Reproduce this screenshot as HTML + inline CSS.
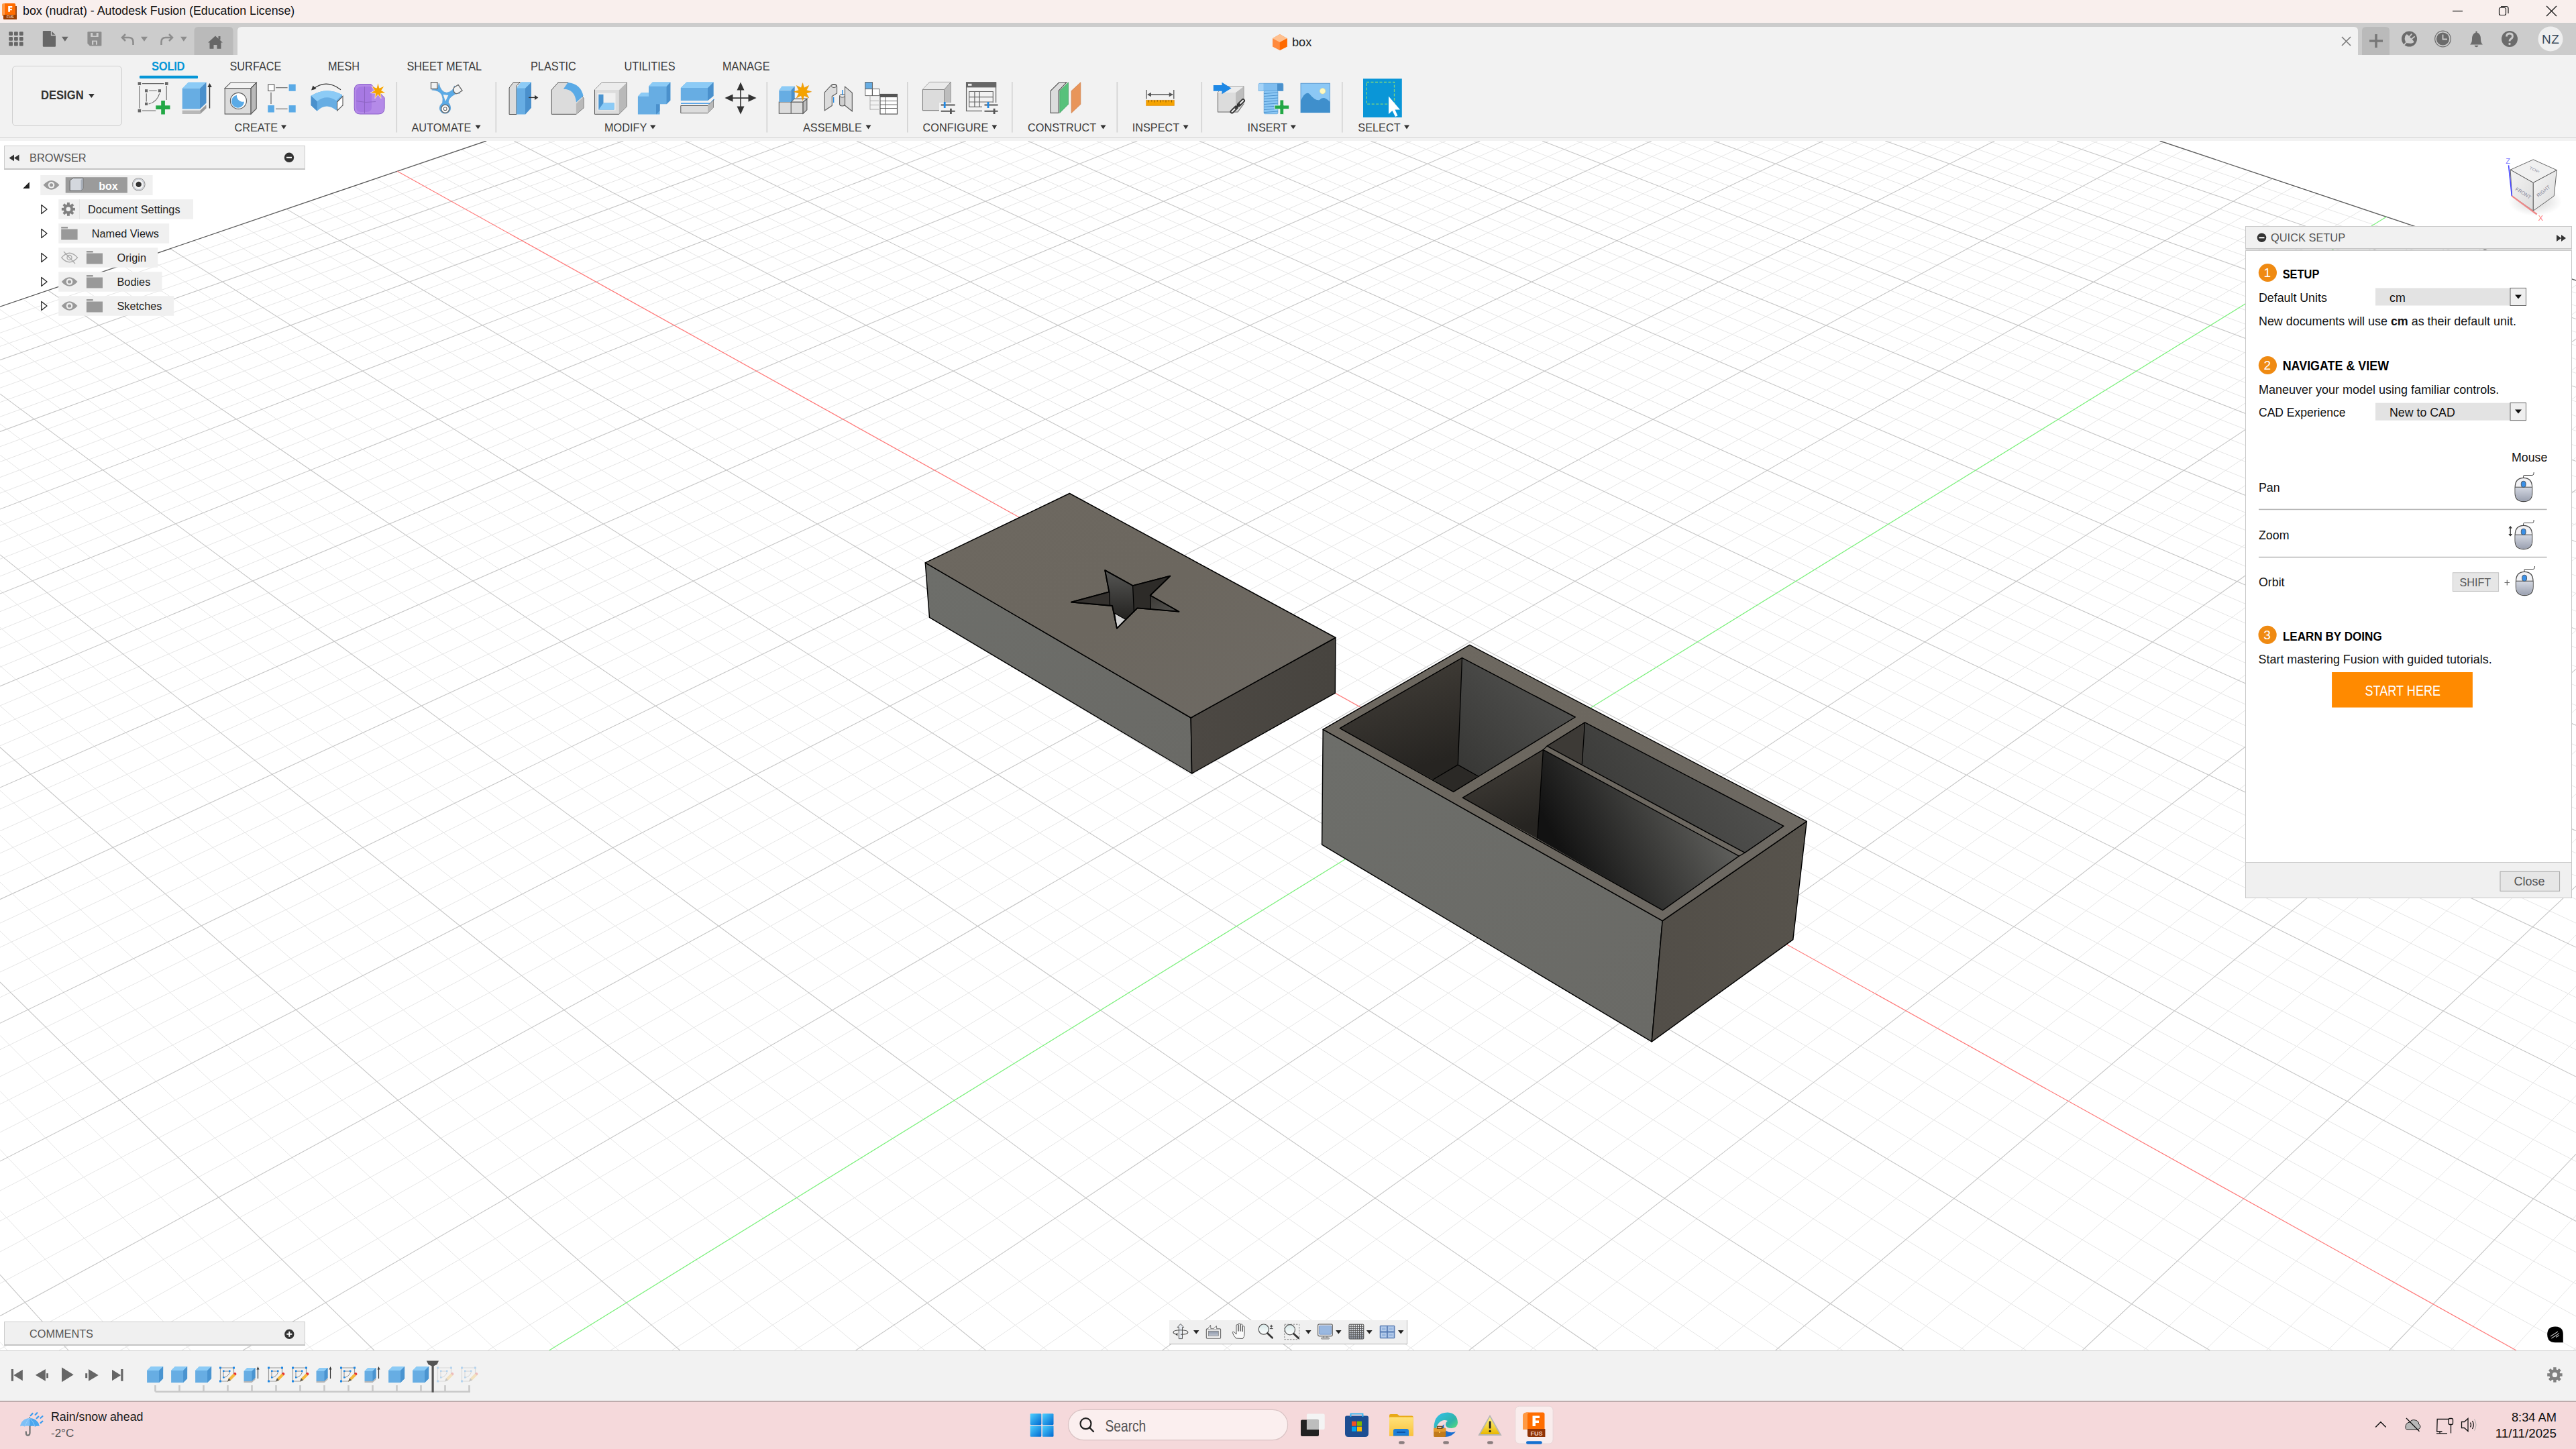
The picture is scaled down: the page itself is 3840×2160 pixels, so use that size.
<!DOCTYPE html>
<html><head><meta charset="utf-8"><title>box (nudrat) - Autodesk Fusion</title>
<style>
*{margin:0;padding:0;box-sizing:border-box}
html,body{width:3840px;height:2160px;overflow:hidden;background:#fff;font-family:"Liberation Sans",sans-serif;color:#222}
.abs{position:absolute}
#titlebar{position:absolute;left:0;top:0;width:3840px;height:34px;background:#f9efed}
#qat{position:absolute;left:0;top:34px;width:3840px;height:48px;background:#cccccc}
#ribbon{position:absolute;left:0;top:82px;width:3840px;height:128px;background:#f2f2f2;border-bottom:0}
#ribline{position:absolute;left:0;top:204px;width:3840px;height:1px;background:#d2d2d2}
#viewport{position:absolute;left:0;top:210px;width:3840px;height:1803px;background:#fff;overflow:hidden}
.grid{position:absolute;left:0;top:0}
#timeline{position:absolute;left:0;top:2013px;width:3840px;height:76px;background:#f2f2f2;border-top:1px solid #d4d4d4}
#taskbar{position:absolute;left:0;top:2088px;width:3840px;height:72px;background:#f5d9db;border-top:2px solid #bdabac}
.t{position:absolute;white-space:nowrap;line-height:1}
</style></head><body>

<div id="titlebar"></div>
<div id="qat"></div>
<div id="ribbon"></div>
<div id="ribline"></div>
<div id="viewport">

<svg class="grid" width="3840" height="1803" viewBox="0 0 3840 1803">
<path d="M0.0 266.6L776.1 0.0M0.0 286.3L827.2 0.0M0.0 306.3L878.2 0.0M0.0 347.3L980.3 0.0M0.0 368.3L1031.4 0.0M0.0 389.7L1082.5 0.0M0.0 411.3L1133.5 -0.0M0.0 455.8L1235.6 0.0M0.0 478.5L1286.7 0.0M0.0 501.6L1337.8 0.0M0.0 525.2L1388.8 0.0M0.0 573.4L1491.0 0.0M0.0 598.2L1542.1 0.0M0.0 623.4L1593.2 0.0M0.0 649.0L1644.2 0.0M0.0 701.7L1746.4 0.0M0.0 728.7L1797.5 0.0M0.0 756.3L1848.6 0.0M0.0 784.3L1899.7 0.0M0.0 842.0L2001.9 0.0M0.0 871.6L2053.0 0.0M0.0 901.8L2104.1 0.0M0.0 932.6L2155.2 0.0M0.0 996.0L2257.5 0.0M0.0 1028.7L2308.6 0.0M0.0 1062.0L2359.7 0.0M0.0 1096.0L2410.8 0.0M0.0 1166.1L2513.1 0.0M0.0 1202.2L2564.2 0.0M0.0 1239.1L2615.3 0.0M0.0 1276.8L2666.5 0.0M0.0 1354.7L2768.7 0.0M-0.0 1394.9L2819.9 0.0M0.0 1436.0L2871.0 0.0M0.0 1478.0L2922.2 0.0M0.0 1565.0L3024.5 0.0M0.0 1610.1L3075.6 0.0M0.0 1656.1L3126.8 0.0M0.0 1703.3L3177.9 0.0M0.0 1801.2L3257.3 12.6M88.0 1803.0L3289.4 23.4M179.3 1803.0L3321.7 34.2M270.7 1803.0L3354.4 45.2M453.3 1803.0L3420.8 67.4M544.7 1803.0L3454.4 78.7M636.0 1803.0L3488.4 90.1M727.4 1803.0L3522.7 101.6M910.1 1803.0L3592.3 125.0M1001.5 1803.0L3627.6 136.8M1092.8 1803.0L3663.3 148.8M1184.2 1803.0L3699.3 160.8M1367.0 1803.0L3772.4 185.4M1458.4 1803.0L3809.5 197.8M1549.8 1803.0L3840.0 215.2M1641.2 1803.0L3840.0 254.6M1824.0 1803.0L3840.0 337.4M1915.4 1803.0L3840.0 380.8M2006.8 1803.0L3840.0 425.6M2098.2 1803.0L3840.0 472.0M2281.1 1803.0L3840.0 569.7M2372.5 1803.0L3840.0 621.2M2464.0 1803.0L3840.0 674.6M2555.4 1803.0L3840.0 729.9M2738.3 1803.0L3840.0 847.1M2829.8 1803.0L3840.0 909.1M2921.2 1803.0L3840.0 973.7M3012.7 1803.0L3840.0 1040.9M3195.6 1803.0L3840.0 1184.0M3287.1 1803.0L3840.0 1260.2M3378.6 1803.0L3840.0 1339.9M3470.1 1803.0L3840.0 1423.2M3653.1 1803.0L3840.0 1601.9M3744.6 1803.0L3840.0 1697.8M3836.1 1803.0L3840.0 1798.5M0.0 1790.6L10.9 1803.0M0.0 1594.5L193.2 1803.0M0.0 1503.4L284.3 1803.0M0.0 1416.4L375.5 1803.0M0.0 1333.4L466.6 1803.0M0.0 1177.9L648.9 1803.0M0.0 1105.1L740.1 1803.0M0.0 1035.3L831.3 1803.0M0.0 968.3L922.4 1803.0M-0.0 842.1L1104.8 1803.0M0.0 782.6L1196.0 1803.0M-0.0 725.3L1287.2 1803.0M-0.0 670.1L1378.4 1803.0M0.0 565.5L1560.8 1803.0M0.0 516.0L1652.0 1803.0M0.0 468.1L1743.2 1803.0M0.0 421.9L1834.4 1803.0M0.0 333.9L2016.8 1803.0M0.0 292.0L2108.1 1803.0M0.0 251.4L2199.3 1803.0M33.9 235.6L2290.5 1803.0M108.6 210.2L2473.0 1803.0M145.4 197.6L2564.3 1803.0M181.9 185.2L2655.5 1803.0M217.9 172.9L2746.8 1803.0M289.0 148.7L2929.3 1803.0M324.0 136.7L3020.6 1803.0M358.7 124.9L3111.9 1803.0M393.1 113.2L3203.1 1803.0M460.8 90.1L3385.7 1803.0M494.1 78.7L3477.0 1803.0M527.2 67.5L3568.3 1803.0M559.9 56.3L3659.6 1803.0M624.5 34.3L3840.0 1801.8M656.3 23.5L3840.0 1752.2M687.8 12.7L3840.0 1703.8M719.1 2.1L3840.0 1656.6M817.3 0.0L3840.0 1565.4M868.4 0.0L3840.0 1521.3M919.4 0.0L3840.0 1478.3M970.5 0.0L3840.0 1436.2M1072.6 0.0L3840.0 1354.8M1123.7 0.0L3840.0 1315.4M1174.8 0.0L3840.0 1276.8M1225.8 0.0L3840.0 1239.1M1328.0 0.0L3840.0 1166.0M1379.1 0.0L3840.0 1130.5M1430.1 0.0L3840.0 1095.8M1481.2 0.0L3840.0 1061.8M1583.4 0.0L3840.0 995.7M1634.5 0.0L3840.0 963.7M1685.6 -0.0L3840.0 932.3M1736.7 0.0L3840.0 901.4M1838.9 0.0L3840.0 841.5M1890.0 0.0L3840.0 812.4M1941.1 0.0L3840.0 783.8M1992.2 0.0L3840.0 755.7M2094.5 0.0L3840.0 701.1M2145.6 0.0L3840.0 674.5M2196.7 0.0L3840.0 648.4M2247.8 -0.0L3840.0 622.7M2350.1 0.0L3840.0 572.7M2401.2 0.0L3840.0 548.3M2452.3 0.0L3840.0 524.3M2503.5 0.0L3840.0 500.8M2605.8 0.0L3840.0 454.8M2656.9 0.0L3840.0 432.4M2708.0 0.0L3840.0 410.4M2759.2 0.0L3840.0 388.7M2861.5 -0.0L3840.0 346.3M2912.6 0.0L3840.0 325.6M2963.8 0.0L3840.0 305.3M3015.0 -0.0L3840.0 285.2M3117.3 -0.0L3840.0 246.0M3168.5 0.0L3840.0 226.9" stroke="#e6e6e6" stroke-width="1" fill="none"/>
<path d="M0.0 326.7L929.3 0.0M0.0 433.4L1184.6 0.0M0.0 549.1L1439.9 0.0M0.0 675.1L1695.3 0.0M0.0 812.9L1950.8 0.0M0.0 964.0L2206.3 0.0M0.0 1130.7L2461.9 0.0M0.0 1315.3L2717.6 0.0M0.0 1521.0L2973.3 0.0M0.0 1751.7L3225.5 2.0M362.0 1803.0L3387.5 56.3M1275.6 1803.0L3735.6 173.0M1732.6 1803.0L3840.0 295.3M2189.7 1803.0L3840.0 520.0M2646.8 1803.0L3840.0 787.4M3104.1 1803.0L3840.0 1111.0M3561.6 1803.0L3840.0 1510.4M-0.0 1690.2L102.0 1803.0M0.0 1254.0L557.8 1803.0M0.0 903.9L1013.6 1803.0M0.0 616.9L1469.6 1803.0M0.0 377.1L1925.6 1803.0M71.5 222.8L2381.8 1803.0M253.6 160.7L2838.1 1803.0M427.1 101.6L3294.4 1803.0M766.3 0.0L3840.0 1610.4M1021.5 0.0L3840.0 1395.0M1276.9 0.0L3840.0 1202.1M1532.3 0.0L3840.0 1028.4M1787.8 0.0L3840.0 871.2M2043.3 0.0L3840.0 728.1M2298.9 0.0L3840.0 597.5M2554.6 0.0L3840.0 477.6M2810.3 0.0L3840.0 367.3M3066.1 0.0L3840.0 265.5" stroke="#c6c6c6" stroke-width="1.1" fill="none"/>
<path d="M0.0 247.2L725.1 0.0M3219.6 0.0L3840.0 208.0" stroke="#5e5e5e" stroke-width="1.35" fill="none"/>
<path d="M592.3 45.3L3750.9 1803.0" stroke="#ff7a7a" stroke-width="1.25" fill="none"/>
<path d="M818.7 1803.0L3557.3 113.2" stroke="#7cf07c" stroke-width="1.25" fill="none"/>
</svg>
<svg class="grid" width="3840" height="1803" viewBox="0 210 3840 1803">
<defs>
<linearGradient id="gTop" x1="0" y1="0" x2="1" y2="1"><stop offset="0" stop-color="#6d6860"/><stop offset="0.5" stop-color="#6c675f"/><stop offset="1" stop-color="#6e6a64"/></linearGradient>
<linearGradient id="gLeft" x1="0" y1="0" x2="1" y2="1"><stop offset="0" stop-color="#6d6e6a"/><stop offset="1" stop-color="#6a6a66"/></linearGradient>
<linearGradient id="gRight" x1="0" y1="0" x2="1" y2="0"><stop offset="0" stop-color="#4c4843"/><stop offset="1" stop-color="#47443f"/></linearGradient>
<linearGradient id="gBRight" x1="0" y1="0" x2="1" y2="0"><stop offset="0" stop-color="#524e48"/><stop offset="1" stop-color="#57534c"/></linearGradient>
<linearGradient id="gWallA" x1="0" y1="0" x2="0.3" y2="1"><stop offset="0" stop-color="#46423c"/><stop offset="1" stop-color="#262421"/></linearGradient>
<linearGradient id="gWallB" x1="1" y1="0" x2="0" y2="1"><stop offset="0" stop-color="#575755"/><stop offset="1" stop-color="#363634"/></linearGradient>
<linearGradient id="gFront" gradientUnits="userSpaceOnUse" x1="2560" y1="1225" x2="2360" y2="1330"><stop offset="0" stop-color="#5e5e5b"/><stop offset="0.45" stop-color="#3c3c3a"/><stop offset="1" stop-color="#121212"/></linearGradient>
<linearGradient id="gRB" x1="1" y1="0.3" x2="0" y2="0.7"><stop offset="0" stop-color="#555553"/><stop offset="1" stop-color="#393937"/></linearGradient>
<linearGradient id="gStarMain" x1="0" y1="0" x2="0" y2="1"><stop offset="0" stop-color="#555553"/><stop offset="1" stop-color="#232220"/></linearGradient>
<linearGradient id="gStarR" x1="0" y1="0" x2="1" y2="1"><stop offset="0" stop-color="#3b3935"/><stop offset="1" stop-color="#555451"/></linearGradient>
</defs>
<g stroke="#000" stroke-width="1.45" stroke-linejoin="round">
<!-- LID -->
<polygon fill="url(#gLeft)" points="1379.3,838.9 1775.2,1070.0 1776.7,1153.0 1385.5,920.3"/>
<polygon fill="url(#gRight)" points="1775.2,1070.0 1990.9,950.5 1990.3,1033.2 1776.7,1153.0"/>
<polygon fill="url(#gTop)" points="1594.4,735.5 1990.9,950.5 1775.2,1070.0 1379.3,838.9"/>
<!-- star -->
<polygon fill="#34322f" stroke-width="1.8" points="1647.2,850.1 1688.6,873.0 1744.3,858.7 1714.6,887.5 1757.4,911.7 1695.4,906.3 1665.0,936.7 1658.1,903.0 1596.9,897.6 1653.4,882.4"/>
<polygon fill="#34312e" stroke="none" points="1596.9,897.6 1653.4,882.4 1654.5,902.3 1658.1,903.0"/>
<polygon fill="url(#gStarMain)" stroke="none" points="1648.5,851.5 1688.2,873.6 1690.0,910.2 1677.7,923.3 1661.4,913.9 1658.4,903.5 1654.8,902.0 1653.9,882.6"/>
<polygon fill="#2d2b28" stroke="none" points="1689.2,873.8 1743.0,859.6 1714.0,887.5 1715.0,907.0 1695.4,906.3 1690.4,910.7"/>
<polygon fill="url(#gStarR)" stroke="none" points="1715.2,888.5 1755.5,911.2 1715.6,907.2"/>
<polygon fill="#d2d2d2" stroke-width="1.2" points="1661.4,913.9 1677.7,923.3 1665.0,936.7"/>
<path fill="none" stroke-width="1.3" d="M1653.9 882.6L1654.5 902.3M1688.6 873.0L1690.4 910.7M1714.6 887.5L1715.4 907.4"/>
<polygon fill="none" stroke-width="1.8" points="1647.2,850.1 1688.6,873.0 1744.3,858.7 1714.6,887.5 1757.4,911.7 1695.4,906.3 1665.0,936.7 1658.1,903.0 1596.9,897.6 1653.4,882.4"/>
<!-- BASE -->
<polygon fill="url(#gLeft)" points="1972.2,1087.3 2478.2,1372.6 2462.2,1552.8 1970.6,1259.2"/>
<polygon fill="url(#gBRight)" points="2478.2,1372.6 2693.2,1224.4 2672.8,1400.7 2462.2,1552.8"/>
<polygon fill="url(#gTop)" points="2190.8,961.4 2693.2,1224.4 2478.2,1372.6 1972.2,1087.3"/>
<!-- left compartment -->
<polygon fill="url(#gWallA)" stroke="none" points="1997.3,1085.6 2179.5,980.6 2173.3,1140.1 2136.0,1162.2"/>
<polygon fill="url(#gWallB)" stroke="none" points="2179.5,980.6 2348.2,1069.0 2203.3,1157.0 2173.3,1140.1"/>
<polygon fill="#2b2926" stroke="none" points="2136.0,1162.2 2173.3,1140.1 2203.3,1157.0 2166.6,1180.4"/>
<path fill="none" stroke-width="1.3" d="M2179.5 980.6L2173.3 1140.1M2136.0 1162.2L2173.3 1140.1L2203.3 1157.0"/>
<polygon fill="none" points="1997.3,1085.6 2179.5,980.6 2348.2,1069.0 2166.6,1180.4"/>
<!-- right back compartment -->
<polygon fill="#3d3a36" stroke="none" points="2306.1,1112.2 2362.5,1076.9 2358.3,1139.5"/>
<polygon fill="url(#gRB)" stroke="none" points="2362.5,1076.9 2658.9,1231.4 2601.0,1271.2 2358.3,1139.5"/>
<path fill="none" stroke-width="1.3" d="M2362.5 1076.9L2358.3 1139.5"/>
<polygon fill="none" points="2306.1,1112.2 2362.5,1076.9 2658.9,1231.4 2601.0,1271.2"/>
<!-- front compartment -->
<polygon fill="url(#gWallA)" stroke="none" points="2180.4,1189.2 2300.4,1117.6 2291.7,1250.0"/>
<polygon fill="url(#gFront)" stroke="none" points="2300.4,1117.6 2592.3,1276.1 2478.5,1356.9 2291.7,1250.0"/>
<path fill="none" stroke-width="1.3" d="M2300.4 1117.6L2291.7 1250.0"/>
<polygon fill="none" points="2180.4,1189.2 2300.4,1117.6 2592.3,1276.1 2478.5,1356.9"/>
<path fill="none" stroke-width="1.3" d="M2300.4 1117.6L2306.1 1112.2M2592.3 1276.1L2601.0 1271.2"/>
</g>
</svg>

</div>
<div id="timeline"></div>
<div id="taskbar"></div>

<!-- BROWSER PANEL -->
<div class="abs" style="left:6px;top:216.5px;width:449px;height:36px;background:#f1f1f1;border:1px solid #cbcbcb;border-bottom:2px solid #c4c4c4"></div>
<div class="t" style="left:44px;top:227px;font-size:16.4px;color:#555">BROWSER</div>
<svg class="abs" style="left:0;top:210px" width="460" height="270" viewBox="0 210 460 270">
<path d="M13.5 235.4L21 230.5V240.3ZM21 235.4L28.5 230.5V240.3Z" fill="#333"/>
<circle cx="431" cy="234.8" r="7.2" fill="#333"/><rect x="427" y="233.8" width="8" height="2" fill="#fff"/>
<g fill="#f0f0f0">
<rect x="60.2" y="261" width="167.4" height="29.9"/>
<rect x="87.2" y="297.2" width="200.8" height="29.5"/>
<rect x="87.2" y="333.2" width="165" height="29.5"/>
<rect x="87.2" y="369.2" width="148" height="29.5"/>
<rect x="87.2" y="405.2" width="154.3" height="29.5"/>
<rect x="87.2" y="441.2" width="172" height="29.5"/>
</g>
<path d="M34.1 280.9L43.9 271.3V280.9Z" fill="#222"/>
<path d="M61.8 305.5L70 312L61.8 318.6Z M61.8 341.5L70 348L61.8 354.6Z M61.8 377.5L70 384L61.8 390.6Z M61.8 413.5L70 420L61.8 426.6Z M61.8 449.5L70 456L61.8 462.6Z" fill="#fff" stroke="#222" stroke-width="1.3" stroke-linejoin="round"/>
<g fill="#999">
<path d="M64.6 275.8Q76.5 262 88.5 275.8Q76.5 289.5 64.6 275.8Z"/>
<path d="M91.8 420Q103.5 406.5 115.5 420Q103.5 433.5 91.8 420Z"/>
<path d="M91.8 456Q103.5 442.5 115.5 456Q103.5 469.5 91.8 456Z"/>
</g>
<g fill="#f0f0f0"><circle cx="76.5" cy="275.8" r="4.8"/><circle cx="103.5" cy="420" r="4.8"/><circle cx="103.5" cy="456" r="4.8"/></g>
<g fill="#999"><circle cx="76.5" cy="275.8" r="2.6"/><circle cx="103.5" cy="420" r="2.6"/><circle cx="103.5" cy="456" r="2.6"/></g>
<path d="M91.8 384Q103.5 370.5 115.5 384Q103.5 397.5 91.8 384Z" fill="none" stroke="#aaa" stroke-width="1.3"/>
<circle cx="103.5" cy="384" r="3.5" fill="none" stroke="#aaa" stroke-width="1.3"/>
<path d="M95 375L112 393" stroke="#aaa" stroke-width="1.3"/>
<rect x="97.7" y="264.2" width="92.2" height="23.4" fill="#9b9b9b"/>
<path d="M106.5 267L109.5 265.3H123.8V281L120.5 284.3H104.2V269.5Z" fill="#d4d8de" stroke="#555" stroke-width=".9"/>
<path d="M120.5 268.5L123.8 265.3V281L120.5 284.3Z" fill="#a9b0ba"/>
<circle cx="206.7" cy="274.9" r="9.4" fill="#f2f2f2" stroke="#888" stroke-width="1"/><circle cx="206.7" cy="274.9" r="7.8" fill="none" stroke="#c8ccd4" stroke-width="1.5"/>
<circle cx="206.7" cy="274.9" r="4.2" fill="#333"/>
<g fill="#808080" transform="translate(101.9 311.8)"><circle r="7.3"/><rect x="-1.95" y="-10" width="3.9" height="20"/><rect x="-1.95" y="-10" width="3.9" height="20" transform="rotate(45)"/><rect x="-1.95" y="-10" width="3.9" height="20" transform="rotate(90)"/><rect x="-1.95" y="-10" width="3.9" height="20" transform="rotate(135)"/></g>
<circle cx="101.9" cy="311.8" r="3.3" fill="#f0f0f0"/>
<rect x="118" y="297.2" width="1" height="29.5" fill="#e4e4e4"/>
<g fill="#999">
<path d="M91.2 340.5H101V338H91.2ZM91.2 341.5H115.6V357.5H91.2Z"/>
<path d="M128.9 376.5H138.7V374H128.9ZM128.9 377.5H153V393.5H128.9Z"/>
<path d="M128.9 412.5H138.7V410H128.9ZM128.9 413.5H153V429.5H128.9Z"/>
<path d="M128.9 448.5H138.7V446H128.9ZM128.9 449.5H153V465.5H128.9Z"/>
</g>
</svg>
<div class="t" style="left:147.2px;top:269.5px;font-size:16px;font-weight:bold;color:#fff">box</div>
<div class="t" style="left:131px;top:303.5px;font-size:16.3px;color:#222">Document Settings</div>
<div class="t" style="left:136.8px;top:339.5px;font-size:16.3px;color:#222">Named Views</div>
<div class="t" style="left:174.5px;top:375.5px;font-size:16.3px;color:#222">Origin</div>
<div class="t" style="left:174.5px;top:411.5px;font-size:16.3px;color:#222">Bodies</div>
<div class="t" style="left:174.5px;top:447.5px;font-size:16.3px;color:#222">Sketches</div>
<!-- COMMENTS -->
<div class="abs" style="left:6px;top:1970.3px;width:449px;height:36px;background:#f0f0f0;border:1px solid #cbcbcb;border-bottom:2px solid #c4c4c4"></div>
<div class="t" style="left:44px;top:1980px;font-size:16.3px;color:#555">COMMENTS</div>
<svg class="abs" style="left:420px;top:1978px" width="24" height="24" viewBox="420 1978 24 24"><circle cx="431.3" cy="1988.8" r="7.2" fill="#333"/><path d="M427.3 1988.8H435.3M431.3 1984.8V1992.8" stroke="#fff" stroke-width="2"/></svg>
<!-- QUICK SETUP -->
<div class="abs" style="left:3347px;top:336.5px;width:486.5px;height:35.5px;background:#f1f1f1;border:1px solid #c8c8c8;border-bottom:2px solid #c4c4c4"></div>
<div class="abs" style="left:3347px;top:373px;width:486.5px;height:966px;background:#fff;border:1px solid #c8c8c8"></div>
<div class="abs" style="left:3348px;top:1285.4px;width:484.5px;height:53px;background:#f0f0f0;border-top:1px solid #c8c8c8"></div>
<div class="t" style="left:3385px;top:345.5px;font-size:16.4px;color:#555">QUICK SETUP</div>
<svg class="abs" style="left:3340px;top:330px" width="500" height="1020" viewBox="3340 330 500 1020">
<circle cx="3371.5" cy="354.3" r="6.8" fill="#333"/><rect x="3367.5" y="353.3" width="8" height="2" fill="#fff"/>
<path d="M3811 350L3818 355L3811 360ZM3818 350L3825 355L3818 360Z" fill="#333"/>
<g fill="#ef8a12"><circle cx="3380.4" cy="406.5" r="13.6"/><circle cx="3380.4" cy="544.5" r="13.6"/><circle cx="3380.1" cy="946.4" r="13.6"/></g>
<rect x="3541" y="429.4" width="224.5" height="26.1" fill="#e3e3e3"/>
<rect x="3541" y="600.6" width="224.5" height="26.1" fill="#e3e3e3"/>
<rect x="3742" y="429.4" width="23.5" height="26.1" fill="#efefef" stroke="#666" stroke-width="1"/>
<rect x="3742" y="600.6" width="23.5" height="26.1" fill="#efefef" stroke="#666" stroke-width="1"/>
<path d="M3749 439.5H3759L3754 445.5ZM3749 610.5H3759L3754 616.5Z" fill="#111"/>
<rect x="3367" y="758.6" width="429.6" height="1.6" fill="#b8b8b8"/>
<rect x="3367" y="829.8" width="429.6" height="1.6" fill="#b8b8b8"/>
<rect x="3656.4" y="853.7" width="68.2" height="27.8" fill="#e6e6e6" stroke="#c4c4c4" stroke-width="1"/>
<path d="M3733.5 868.5H3741M3737.3 864.5V872.5" stroke="#666" stroke-width="1.2"/>
<defs><linearGradient id="mgr" x1="0" y1="0" x2="0" y2="1"><stop offset="0" stop-color="#d4d8e2"/><stop offset="1" stop-color="#9aa0b0"/></linearGradient></defs>
<g id="mouse">
<path d="M3761.6 713V709.5Q3761.6 708.5 3762.6 708.5H3774.5Q3776.5 708.5 3776.8 706.8L3777.2 704" fill="none" stroke="#444" stroke-width="1"/>
<path d="M3749.1 727Q3749.1 712.4 3761.9 712.4Q3774.7 712.4 3774.7 727V735Q3774.7 747.6 3761.9 747.6Q3749.1 747.6 3749.1 735Z" fill="#f2f2f5" stroke="#444" stroke-width="1.2"/>
<path d="M3749.6 726.4H3774.2V735Q3774.2 747 3761.9 747Q3749.6 747 3749.6 735Z" fill="url(#mgr)"/>
<path d="M3749.1 726.2H3774.7" stroke="#444" stroke-width="1"/>
<rect x="3758.3" y="717.3" width="6.8" height="9" rx="3" fill="#3a90e8" stroke="#444" stroke-width=".8"/>
</g>
<use href="#mouse" x="0" y="71"/>
<use href="#mouse" x="1.4" y="140"/>
<path d="M3742.2 785V798.5" stroke="#333" stroke-width="1.3"/><path d="M3739.3 787.5L3742.2 784L3745.1 787.5ZM3739.3 796L3742.2 799.5L3745.1 796Z" fill="#333"/>
<rect x="3476.1" y="1002" width="209.8" height="52.6" fill="#ff8a00"/>
<rect x="3727" y="1299.3" width="88.6" height="29" fill="#e6e6e6" stroke="#a8a8a8" stroke-width="1"/>
</svg>
<div class="t" style="left:3374.5px;top:396.5px;font-size:19px;color:#fff">1</div>
<div class="t" style="left:3374.5px;top:534.5px;font-size:19px;color:#fff">2</div>
<div class="t" style="left:3374.2px;top:936.5px;font-size:19px;color:#fff">3</div>
<div class="t" style="left:3402.7px;top:400.5px;font-size:16.4px;font-weight:bold;color:#000;transform:scaleY(1.12);transform-origin:0 100%">SETUP</div>
<div class="t" style="left:3367px;top:436px;font-size:17.8px;color:#111">Default Units</div>
<div class="t" style="left:3562px;top:436px;font-size:17.8px;color:#111">cm</div>
<div class="t" style="left:3367px;top:471px;font-size:17.9px;color:#111">New documents will use <b>cm</b> as their default unit.</div>
<div class="t" style="left:3402.7px;top:537.5px;font-size:17.9px;font-weight:bold;color:#000;transform:scaleY(1.1);transform-origin:0 100%">NAVIGATE &amp; VIEW</div>
<div class="t" style="left:3367px;top:571.5px;font-size:18px;color:#111">Maneuver your model using familiar controls.</div>
<div class="t" style="left:3367px;top:607px;font-size:17.5px;color:#111">CAD Experience</div>
<div class="t" style="left:3562px;top:607px;font-size:17.8px;color:#111">New to CAD</div>
<div class="t" style="left:3744px;top:674px;font-size:17.8px;color:#111">Mouse</div>
<div class="t" style="left:3367px;top:719px;font-size:17.8px;color:#111">Pan</div>
<div class="t" style="left:3367px;top:790px;font-size:17.8px;color:#111">Zoom</div>
<div class="t" style="left:3367px;top:860px;font-size:17.8px;color:#111">Orbit</div>
<div class="t" style="left:3666.5px;top:860px;font-size:16.2px;color:#555">SHIFT</div>
<div class="t" style="left:3402.9px;top:941px;font-size:17.1px;font-weight:bold;color:#000;transform:scaleY(1.08);transform-origin:0 100%">LEARN BY DOING</div>
<div class="t" style="left:3366.6px;top:974.5px;font-size:17.9px;color:#111">Start mastering Fusion with guided tutorials.</div>
<div class="t" style="left:3525.5px;top:1021px;font-size:18.1px;color:#fff;transform:scaleY(1.18);transform-origin:0 50%">START HERE</div>
<div class="t" style="left:3747.5px;top:1305px;font-size:18px;color:#555">Close</div>
<!-- VIEWCUBE -->
<svg class="abs" style="left:3700px;top:215px" width="140" height="125" viewBox="3700 215 140 125">
<defs><radialGradient id="vcs" cx=".5" cy=".5" r=".5"><stop offset="0" stop-color="#000" stop-opacity=".18"/><stop offset="1" stop-color="#000" stop-opacity="0"/></radialGradient>
<linearGradient id="vcf" x1="0" y1="0" x2="1" y2="1"><stop offset="0" stop-color="#f4f4f4"/><stop offset="1" stop-color="#dcdcdc"/></linearGradient></defs>
<ellipse cx="3779" cy="300" rx="40" ry="22" fill="url(#vcs)"/>
<path d="M3776.3 237.9L3811.3 253.6L3776.3 272.4L3742.2 253.1Z" fill="#f0f0f0" stroke="#555" stroke-width=".9"/>
<path d="M3742.2 253.1L3776.3 272.4V314.2L3744.4 292.2Z" fill="url(#vcf)" stroke="#555" stroke-width=".9"/>
<path d="M3776.3 272.4L3811.3 253.6L3807.2 292.2L3776.3 314.2Z" fill="url(#vcf)" stroke="#555" stroke-width=".9"/>
<path d="M3744.4 292.2L3739.5 246.4" stroke="#4444ff" stroke-width="1.6"/>
<path d="M3744.4 292.2L3781.7 319.5" stroke="#e88" stroke-width="2.2"/>
<text x="3738.6" y="244" font-family="Liberation Sans" font-size="11" fill="#7777ff" text-anchor="middle">Z</text>
<text x="3787.5" y="329" font-family="Liberation Sans" font-size="11" fill="#ff7777" text-anchor="middle">X</text>
<text transform="translate(3777 255) rotate(25) scale(1 .7)" font-family="Liberation Sans" font-size="8" fill="#99a" text-anchor="middle">TOP</text>
<text transform="translate(3760 290) rotate(32) skewY(0)" font-family="Liberation Sans" font-size="7.5" fill="#889" text-anchor="middle">FRONT</text>
<text transform="translate(3793 287) rotate(-40)" font-family="Liberation Sans" font-size="7.5" fill="#889" text-anchor="middle">RIGHT</text>
</svg>
<!-- NAV BAR -->
<div class="abs" style="left:1743px;top:1968px;width:355px;height:35.5px;background:#f0f0f0;border-right:1px solid #b8b8b8;border-bottom:1.5px solid #aaa"></div>
<svg class="abs" style="left:1740px;top:1965px" width="365" height="42" viewBox="1740 1965 365 42">
<defs><linearGradient id="nglass" x1="0" y1="0" x2="0" y2="1"><stop offset="0" stop-color="#d8eaea"/><stop offset="1" stop-color="#fdfdfd"/></linearGradient>
<linearGradient id="nscr" x1="0" y1="0" x2="0" y2="1"><stop offset="0" stop-color="#8a94a6"/><stop offset="1" stop-color="#c0c6d2"/></linearGradient>
<linearGradient id="ngrid" x1="0" y1="0" x2="0" y2="1"><stop offset="0" stop-color="#fff"/><stop offset="1" stop-color="#9aa4b4"/></linearGradient></defs>
<g fill="#222"><path d="M1779 1983H1787.5L1783.25 1988.6Z"/><path d="M1946.1 1983.1H1954.6L1950.35 1988.6Z"/><path d="M1991.1 1983.1H1999.6L1995.35 1988.6Z"/><path d="M2036.8 1983.1H2045.7L2041.25 1988.6Z"/><path d="M2084 1983.1H2092.5L2088.25 1988.6Z"/></g>
<path d="M1757.3 1995.6V1978.6H1755.1L1759.9 1973.5L1764.7 1978.6H1762.5V1995.6Z" fill="#e4e8ee" stroke="#555" stroke-width="1"/>
<path d="M1754 1989Q1749 1988 1749 1986Q1749 1982.7 1759.9 1982.7Q1770.9 1982.7 1770.9 1986Q1770.9 1989.3 1760 1989.3" fill="none" stroke="#444" stroke-width="1.1"/>
<path d="M1752.5 1989.2L1755.3 1986.8V1991.6Z" fill="#333"/>
<rect x="1798.3" y="1980.9" width="21.3" height="14.3" rx="1.2" fill="#f0f0f0" stroke="#666" stroke-width="1.1"/>
<rect x="1801.6" y="1984.2" width="14.7" height="7.3" fill="url(#nscr)" stroke="#777" stroke-width=".7"/>
<path d="M1800.5 1980.9L1804.5 1975.3L1805 1980.9M1808.6 1980.9L1813.4 1976.5L1813.8 1980.9" fill="#f8f8f8" stroke="#666" stroke-width=".9"/>
<path d="M1842.5 1995Q1838 1990 1837.4 1986.5Q1837 1985 1838.6 1985.3Q1841 1986 1843 1989V1976Q1843 1974.5 1844.5 1974.5Q1846 1974.5 1846 1976V1984.5V1974Q1846 1972.8 1847.6 1972.8Q1849.1 1972.8 1849.1 1974V1984.5V1975.2Q1849.1 1974 1850.6 1974Q1852.1 1974 1852.1 1975.2V1985V1978Q1852.1 1976.8 1853.6 1976.8Q1855.1 1976.8 1855.1 1978V1988Q1855.1 1993 1852.5 1995.5Z" fill="#fafafa" stroke="#555" stroke-width="1"/>
<circle cx="1883.8" cy="1981.6" r="7.6" fill="url(#nglass)" stroke="#555" stroke-width="1.2"/>
<path d="M1889.5 1987.6L1896.6 1994.3" stroke="#333" stroke-width="2.8" stroke-linecap="round"/>
<path d="M1895.2 1974.8V1979.3M1893 1977H1897.4M1892.8 1980.6H1897.6" stroke="#333" stroke-width="1"/>
<rect x="1914.8" y="1974.2" width="22" height="22.5" fill="none" stroke="#888" stroke-width="1" stroke-dasharray="2.5 1.8"/>
<circle cx="1922.9" cy="1982.3" r="7.6" fill="url(#nglass)" stroke="#555" stroke-width="1.2"/>
<path d="M1928.5 1988.2L1935.5 1994.6" stroke="#333" stroke-width="2.8" stroke-linecap="round"/>
<rect x="1964.7" y="1974" width="21.5" height="17.6" rx="1.5" fill="#fafafa" stroke="#444" stroke-width="1.1"/>
<rect x="1966.6" y="1976.2" width="17.8" height="13" rx=".8" fill="#9ab8e0" stroke="#5b7fb8" stroke-width=".7"/>
<path d="M1973 1991.6V1994M1978 1991.6V1994" stroke="#777" stroke-width="1"/><rect x="1969.5" y="1994" width="12" height="2" rx="1" fill="#ddd" stroke="#555" stroke-width=".7"/>
<rect x="2011" y="1974.2" width="21.8" height="21.8" rx="1" fill="url(#ngrid)" stroke="#444" stroke-width="1"/>
<path d="M2011 1977.3H2032.8M2011 1980.4H2032.8M2011 1983.5H2032.8M2011 1986.6H2032.8M2011 1989.7H2032.8M2011 1992.8H2032.8M2014.1 1974.2V1996M2017.2 1974.2V1996M2020.3 1974.2V1996M2023.4 1974.2V1996M2026.5 1974.2V1996M2029.6 1974.2V1996" stroke="#555" stroke-width=".9"/>
<rect x="2057.3" y="1976.3" width="21.5" height="18.5" rx="1" fill="#9ab8e0" stroke="#4a6ea8" stroke-width="1.1"/>
<path d="M2068 1976.3V1994.8M2057.3 1985.5H2078.8" stroke="#4a6ea8" stroke-width="1.3"/>
<path d="M2059.5 1978.5H2066V1983.5H2059.5ZM2070 1978.5H2076.5V1983.5H2070ZM2059.5 1987.5H2066V1992.5H2059.5ZM2070 1987.5H2076.5V1992.5H2070Z" fill="none" stroke="#c8d8f0" stroke-width=".7"/>
</svg>
<svg class="abs" style="left:3795px;top:1976px" width="28" height="28" viewBox="3795 1976 28 28">
<path d="M3809 1977.5Q3820.8 1977.5 3820.8 1989.3V2001.2H3809Q3797.2 2001.2 3797.2 1989.3Q3797.2 1977.5 3809 1977.5Z" fill="#000"/>
<path d="M3802 1992L3813 1985M3803.5 1995L3815 1987.5M3810 1993.5L3815 1990.5" stroke="#fff" stroke-width="1"/>
</svg>

<!-- TITLE BAR -->
<svg class="abs" style="left:0;top:0" width="30" height="34" viewBox="0 0 30 34">
<path d="M3 7Q3 5.5 4.5 5.2L6.8 5V23.5H3Z" fill="#ff9b48"/>
<path d="M6.8 5H21.3Q23.1 5 23.1 6.8V21.9H6.8Z" fill="#ff6c00"/>
<path d="M23.1 8.9H24.9V28.9H23.1Z" fill="#8f3a06"/>
<path d="M5 21.9H24.9V28.9H6Q5 28.9 5 27.9Z" fill="#993d00"/>
<text x="15.1" y="27.2" font-family="Liberation Sans" font-weight="bold" font-size="5.6" fill="#ecd0bb" text-anchor="middle" letter-spacing="-.2">FUS</text>
<path d="M12.2 9H18.3V11.5H15V12.9H17.8V15.3H15V17.8H12.2Z" fill="#fff"/>
</svg>
<div class="t" style="left:34px;top:8px;font-size:17.8px;color:#111">box (nudrat) - Autodesk Fusion (Education License)</div>
<svg class="abs" style="left:3640px;top:0" width="200" height="34" viewBox="3640 0 200 34">
<path d="M3656 16.5H3671" stroke="#111" stroke-width="1.2"/>
<rect x="3725.5" y="11.5" width="10" height="11" rx="2" fill="none" stroke="#111" stroke-width="1.2"/>
<path d="M3728 9.5H3736Q3739 9.5 3739 12.5V20" fill="none" stroke="#111" stroke-width="1.2"/>
<path d="M3796 9L3811 24M3811 9L3796 24" stroke="#111" stroke-width="1.3"/>
</svg>

<!-- QAT -->
<svg class="abs" style="left:0;top:34px" width="3840" height="48" viewBox="0 34 3840 48">
<g fill="#676767">
<rect x="13.2" y="47.2" width="5.8" height="5.8" rx="1.2"/><rect x="21" y="47.2" width="5.8" height="5.8" rx="1.2"/><rect x="28.8" y="47.2" width="5.8" height="5.8" rx="1.2"/>
<rect x="13.2" y="55" width="5.8" height="5.8" rx="1.2"/><rect x="21" y="55" width="5.8" height="5.8" rx="1.2"/><rect x="28.8" y="55" width="5.8" height="5.8" rx="1.2"/>
<rect x="13.2" y="62.6" width="5.8" height="5.8" rx="1.2"/><rect x="21" y="62.6" width="5.8" height="5.8" rx="1.2"/><rect x="28.8" y="62.6" width="5.8" height="5.8" rx="1.2"/>
<path d="M65 46H76.5L83 52.5V68.5Q83 69.8 81.8 69.8H65Q63.8 69.8 63.8 68.5V47.2Q63.8 46 65 46Z"/>
<path d="M92 54.8H101.7L96.85 61.7Z"/>
</g>
<path d="M76.5 46V52.5H83" fill="none" stroke="#cccccc" stroke-width="1.3"/>
<g fill="#8d8d8d">
<path d="M131.6 47.2H150.2Q151.4 47.2 151.4 48.4V67.2Q151.4 68.4 150.2 68.4H134L130.4 64.8V48.4Q130.4 47.2 131.6 47.2Z"/>
<path d="M210 54.8H220L215 61.7Z"/><path d="M269 54.8H278.7L273.85 61.7Z"/>
</g>
<g fill="#cccccc"><rect x="135.2" y="49" width="11.5" height="6"/><rect x="137" y="60.5" width="8" height="6.2"/></g>
<g fill="#8d8d8d"><rect x="138.2" y="49" width="5.5" height="4.5"/><rect x="139.2" y="62" width="3.8" height="5"/></g>
<path d="M187 51L182 56L187 61M182.5 56H192Q198.5 56 198.5 62.5V67" fill="none" stroke="#8d8d8d" stroke-width="2.6"/>
<path d="M252 51L257 56L252 61M256.5 56H247Q240.5 56 240.5 62.5V67" fill="none" stroke="#8d8d8d" stroke-width="2.6"/>
<path d="M289.5 82V46Q289.5 40 295.5 40H341.5Q347.5 40 347.5 46V82Z" fill="#bababa"/>
<path d="M310 63.5L321 53.5L332 63.5H329.5V72.8H323.5V67H318.5V72.8H312.5V63.5Z" fill="#676767"/>
<rect x="325.5" y="54" width="3" height="5" fill="#676767"/>
<path d="M354 82V46Q354 40 360 40H3509Q3515 40 3515 46V82Z" fill="#f2f2f2"/>
<path d="M3521 82V46Q3521 40 3527 40H3556Q3562 40 3562 46V82Z" fill="#bababa"/>
<path d="M3542 51V71M3532 61H3552" stroke="#787878" stroke-width="3.6"/>
<path d="M3491 55L3504 68M3504 55L3491 68" stroke="#7a7a7a" stroke-width="1.6"/>
<!-- box cube -->
<path d="M1907.8 51L1918.7 57.3V69.6L1907.8 75L1897 69.6V57.3Z" fill="#ff8a3d"/>
<path d="M1907.8 51L1918.7 57.3L1907.8 63L1897 57.3Z" fill="#ffc08f"/>
<path d="M1918.7 57.3V69.6L1907.8 75V63Z" fill="#ff6a00"/>
<!-- right icons -->
<g fill="#6b6b6b">
<circle cx="3591.5" cy="58" r="11.5"/>
<circle cx="3641.5" cy="58" r="11.8" fill="none" stroke="#6b6b6b" stroke-width="1.2"/>
<circle cx="3641.5" cy="58" r="9.6"/>
<path d="M3682 66.5Q3685 64 3685 58Q3685 50.5 3690.5 48.5V46.5H3692.5V48.5Q3698 50.5 3698 58Q3698 64 3701 66.5Z"/>
<path d="M3688.5 67.8H3694.5Q3693.5 70.3 3691.5 70.3Q3689.5 70.3 3688.5 67.8Z"/>
<circle cx="3741" cy="58" r="12"/>
</g>
<path d="M3587.8 51.1L3590.9 53.4L3592.8 55.7L3596.2 59.3L3598.5 62L3597.8 63.6Q3595.5 64.9 3593.2 64.8L3587.8 64.3L3585.7 62L3584.6 58L3585.3 53.8Z" fill="#cccccc"/><path d="M3591.4 54.8L3595 50.9M3595 58L3599.1 54.8M3586.8 63.6L3583.6 66.8" stroke="#cccccc" stroke-width="1.8" stroke-linecap="round"/>
<path d="M3641.5 51.5V58.5H3648" fill="none" stroke="#cccccc" stroke-width="1.8"/>
<path d="M3736.5 54.5Q3736.5 50 3741 50Q3745.5 50 3745.5 54Q3745.5 56.5 3743 58Q3741 59.3 3741 61.5" fill="none" stroke="#cccccc" stroke-width="2.8"/>
<circle cx="3741" cy="65.5" r="1.7" fill="#cccccc"/>
<circle cx="3802" cy="58" r="18.5" fill="#efefef"/>
</svg>
<div class="t" style="left:1926px;top:54px;font-size:18.2px;color:#222">box</div>
<div class="t" style="left:3789px;top:49px;font-size:19px;color:#3a4a5a;letter-spacing:0.5px">NZ</div>

<!-- RIBBON -->
<div class="abs" style="left:17.5px;top:98px;width:164px;height:90px;border:1.5px solid #cfcfcf;border-radius:6px;background:#f2f2f2"></div>
<div class="t" style="left:61px;top:133.2px;font-size:16.6px;font-weight:bold;color:#333;transform:scaleY(1.13);transform-origin:0 0">DESIGN</div>
<div class="t" style="left:226px;top:90.8px;font-size:16.6px;font-weight:bold;color:#0696d7;letter-spacing:-0.3px;transform:scaleY(1.06);transform-origin:0 0">SOLID</div>
<div class="t" style="left:342.5px;top:90.3px;font-size:16.3px;color:#3c3c3c;transform:scaleY(1.08);transform-origin:0 0">SURFACE</div>
<div class="t" style="left:489px;top:90.3px;font-size:16.3px;color:#3c3c3c;transform:scaleY(1.08);transform-origin:0 0">MESH</div>
<div class="t" style="left:606.5px;top:90.3px;font-size:16.3px;color:#3c3c3c;transform:scaleY(1.08);transform-origin:0 0">SHEET METAL</div>
<div class="t" style="left:791px;top:90.3px;font-size:16.3px;color:#3c3c3c;transform:scaleY(1.08);transform-origin:0 0">PLASTIC</div>
<div class="t" style="left:930.5px;top:90.3px;font-size:16.3px;color:#3c3c3c;transform:scaleY(1.08);transform-origin:0 0">UTILITIES</div>
<div class="t" style="left:1077px;top:90.3px;font-size:16.3px;color:#3c3c3c;transform:scaleY(1.08);transform-origin:0 0">MANAGE</div>
<div class="t" style="left:349.4px;top:181px;font-size:16.3px;color:#3c3c3c;transform:scaleY(1.04);transform-origin:0 0">CREATE</div>
<div class="t" style="left:613.4px;top:181px;font-size:16.3px;color:#3c3c3c;transform:scaleY(1.04);transform-origin:0 0">AUTOMATE</div>
<div class="t" style="left:901px;top:181px;font-size:16.3px;color:#3c3c3c;transform:scaleY(1.04);transform-origin:0 0">MODIFY</div>
<div class="t" style="left:1197px;top:181px;font-size:16.3px;color:#3c3c3c;transform:scaleY(1.04);transform-origin:0 0">ASSEMBLE</div>
<div class="t" style="left:1375.6px;top:181px;font-size:16.3px;color:#3c3c3c;transform:scaleY(1.04);transform-origin:0 0">CONFIGURE</div>
<div class="t" style="left:1532px;top:181px;font-size:16.3px;color:#3c3c3c;transform:scaleY(1.04);transform-origin:0 0">CONSTRUCT</div>
<div class="t" style="left:1687.7px;top:181px;font-size:16.3px;color:#3c3c3c;transform:scaleY(1.04);transform-origin:0 0">INSPECT</div>
<div class="t" style="left:1859.6px;top:181px;font-size:16.3px;color:#3c3c3c;transform:scaleY(1.04);transform-origin:0 0">INSERT</div>
<div class="t" style="left:2024.3px;top:181px;font-size:16.3px;color:#3c3c3c;transform:scaleY(1.04);transform-origin:0 0">SELECT</div>
<svg class="abs" style="left:0;top:82px" width="2200" height="123" viewBox="0 82 2200 123">
<g fill="#333">
<path d="M132 140H140.7L136.35 146Z"/>
<path d="M419 186.5H427L423 192.5Z"/><path d="M708.5 186.5H716.6L712.55 192.5Z"/><path d="M969 186.5H977.5L973.25 192.5Z"/>
<path d="M1290.5 186.5H1298.5L1294.5 192.5Z"/><path d="M1478.5 186.5H1486.2L1482.35 192.5Z"/><path d="M1640.4 186.5H1648.6L1644.5 192.5Z"/>
<path d="M1763.7 186.5H1771.6L1767.65 192.5Z"/><path d="M1923.7 186.5H1931.9L1927.8 192.5Z"/><path d="M2093 186.5H2101L2097 192.5Z"/>
</g>
<rect x="208" y="112.8" width="87" height="4.2" rx="1" fill="#0696d7"/>
<g fill="#d2d2d2"><rect x="590.5" y="122" width="1.6" height="75.5"/><rect x="738.5" y="122" width="1.6" height="75.5"/><rect x="1142.5" y="122" width="1.6" height="75.5"/><rect x="1352" y="122" width="1.6" height="75.5"/><rect x="1508" y="122" width="1.6" height="75.5"/><rect x="1664.5" y="122" width="1.6" height="75.5"/><rect x="1790.5" y="122" width="1.6" height="75.5"/><rect x="2000" y="122" width="1.6" height="75.5"/></g>
<!-- sketch -->
<g fill="#676767"><rect x="205.6" y="122.3" width="4.6" height="4.6"/><rect x="246" y="122.3" width="4.6" height="4.6"/><rect x="205.6" y="162.8" width="4.6" height="4.6"/><rect x="216" y="133.2" width="4.2" height="4.2"/><rect x="235.8" y="133.2" width="4.2" height="4.2"/><rect x="216" y="152.8" width="4.2" height="4.2"/></g>
<path d="M212 124.6H244.4M207.8 128V161.5M248.2 128V149M212 165H232.3M222.2 135.2H233.8M218.2 139.3V151.4M237.8 139.3Q234 152 221.7 155" fill="none" stroke="#676767" stroke-width="1.1"/>
<path d="M240.2 149.9H245.9V157.2H253.5V163H245.9V170.6H240.2V163H232.3V157.2H240.2Z" fill="#22a845"/>
<!-- extrude -->
<path d="M271.7 131.7L280.8 122.6H307.5L298 131.7Z" fill="#8ccbf6"/>
<rect x="271.7" y="131.7" width="26.3" height="30.8" fill="#67ade3"/>
<path d="M298 131.7L307.5 122.6V153.5L298 162.5Z" fill="#4a90cc"/>
<rect x="271.7" y="164.5" width="26.7" height="5.5" fill="#b8b8b8"/><path d="M298.4 164.5L307.5 155.9V161.4L298.4 170Z" fill="#9a9a9a"/>
<path d="M312.5 161.5V128" stroke="#333" stroke-width="1.4"/><path d="M309.3 130L312.5 124L315.8 130Z" fill="#333"/>
<!-- revolve -->
<path d="M335.2 131.7L343.8 123.2H382.2L374.1 131.7Z" fill="#f3f3f3" stroke="#555" stroke-width="1.1"/>
<rect x="335.2" y="131.7" width="38.9" height="38.3" fill="#dcdcdc" stroke="#555" stroke-width="1.1"/>
<path d="M374.1 131.7L382.2 123.2V162L374.1 170Z" fill="#b9b9b9" stroke="#555" stroke-width="1.1"/>
<circle cx="355.4" cy="150.4" r="12" fill="#fff" stroke="#555" stroke-width="1.1"/>
<path d="M353 141.8A9.5 9.5 0 1 0 364 151.5A9 9 0 0 1 353 141.8Z" fill="#5aaae6"/>
<!-- pattern -->
<rect x="399.8" y="126" width="9" height="9.5" fill="#fff" stroke="#555" stroke-width="1.1"/>
<g fill="#5aaae6"><rect x="430.6" y="125.6" width="10.1" height="10.2"/><rect x="399.3" y="157" width="9.6" height="10.5"/><rect x="430.6" y="157" width="10.1" height="10.5"/></g>
<path d="M411 130.7H428.6M411 162.2H428.6M404 137.8V154.9" stroke="#555" stroke-width="1.1"/>
<!-- sweep -->
<path d="M508 133.7Q486 117 466.5 133" fill="none" stroke="#333" stroke-width="1.1"/><path d="M464 134.5L466.5 127.5L471.5 132.5Z" fill="#333"/>
<path d="M463.6 142.8Q486.3 128.5 510 141.3V153L501.4 164.5Q486.3 152 472.7 165.5L463.6 157Z" fill="#67ade3"/>
<path d="M463.6 142.8Q486.3 128.5 510 141.3L501.4 150Q486.3 140 472.7 151.2Z" fill="#8ccbf6"/>
<path d="M463.6 142.8L472.7 151.2V165.5L463.6 157Z" fill="#4a90cc"/>
<path d="M502.6 152L511 143.4V157L502.6 165Z" fill="#fff" stroke="#555" stroke-width="1.1"/>
<!-- form -->
<path d="M537 125.6H553L573.1 145.5V161Q573.1 170 564 170H537Q528.2 170 528.2 161V134.5Q528.2 125.6 537 125.6Z" fill="#b48ae8" stroke="#8a5cc8" stroke-width="1"/>
<path d="M531 137Q531 129 540 129H554V160Q554 167 546 167H538Q531 167 531 160Z" fill="#a779e3"/>
<path d="M531 150.5Q545 154 560 151.5M543.5 129V169" fill="none" stroke="#8a62c0" stroke-width=".9"/>
<path d="M563.5 123.1L565.6 131.2L573 128.3L568.5 134.8L575.1 138.5L567.3 139.3L568 146.8L563.5 140.7L558.9 146.8L559.7 139.3L551.9 138.5L558.5 134.8L554 128.3L561.4 131.2Z" fill="#f5a300" stroke="#fff" stroke-width=".6"/>
<!-- automate -->
<path d="M643.7 133.9Q655 134.5 658.6 141.4Q661 147 659.6 153.5Q654.8 157 655.3 162.2A8.3 8.3 0 0 0 671.7 162.2Q672 157 668.3 152.5Q668 146 678 140.5Q682 138.8 685.7 139.2L677.5 127.9Q676 136 665.9 138.3Q657 137.5 654.2 124.2L652.5 132.5Z" fill="#5aaae6" stroke="#4a94d0" stroke-width=".6"/>
<path d="M660.6 140.9L668.3 141.9L664 151.1Z" fill="#f2f2f2"/>
<rect x="642.5" y="122.8" width="9.4" height="9.7" fill="#f2f2f2" stroke="#666" stroke-width="1.3"/>
<path d="M677 130.3L683 126.4L689.1 135.1L682.8 139Q679.5 140.5 677.3 138Q675 134 677 130.3Z" fill="#f2f2f2" stroke="#666" stroke-width="1.3"/>
<circle cx="663.7" cy="162.2" r="6" fill="#fff" stroke="#666" stroke-width="1.3"/><circle cx="663.7" cy="162.2" r="2.4" fill="none" stroke="#666" stroke-width="1.1"/>
<!-- press pull -->
<path d="M759.1 131L765.5 122.6H775.5L769.9 128V170.5H759.1Z" fill="#dcdcdc" stroke="#555" stroke-width="1"/>
<path d="M769.9 131L777 122.6H792V160.5L783 170.5H769.9Z" fill="#67ade3"/>
<path d="M783 131.5L792 122.6V160.5L783 170.5Z" fill="#4a90cc"/><path d="M769.9 131.5L777 122.6H792L783 131.5Z" fill="#8ccbf6"/>
<path d="M788 145.4H799" stroke="#333" stroke-width="1.4"/><path d="M797 141.8L802.4 145.4L797 149Z" fill="#333"/>
<!-- fillet -->
<path d="M822.3 134L832 122.9H846.5L870 146V160.8L858.9 170.3H822.3Z" fill="#dcdcdc" stroke="#555" stroke-width="1"/>
<path d="M858.9 154.5L869.5 144.8V160.8L858.9 170.3Z" fill="#b9b9b9"/>
<path d="M839.8 132.8Q857 133 859 152.5L869.5 143Q866 125 846.5 122.9Z" fill="#5aaae6"/>
<!-- shell -->
<path d="M886.5 134L897.5 122.9H934.4V158.8L922.8 170.3H886.5Z" fill="#dcdcdc" stroke="#555" stroke-width="1"/>
<path d="M922.8 134.4L934.4 122.9V158.8L922.8 170.3Z" fill="#b9b9b9"/><path d="M886.5 134L897.5 122.9H934.4L922.8 134Z" fill="#ececec"/>
<rect x="890.5" y="138.8" width="27" height="25.7" fill="#f0f0f0"/>
<path d="M892.3 140.7H899.5V153.5H915.5V163.6H892.3Z" fill="#4a94d0"/><path d="M899.5 153.5H915.5V163.6H892.3Z" fill="#8ccbf6"/>
<!-- combine -->
<path d="M967 128.8L972.8 122.6H999.3V149.6L993.6 155.3H983.6V170.5H950.9V143.8L956 138.2H967Z" fill="#67ade3"/>
<path d="M993.6 128.8L999.3 122.6V149.6L993.6 155.3Z" fill="#4a90cc"/><path d="M967 128.8L972.8 122.6H999.3L993.6 128.8Z" fill="#8ccbf6"/>
<path d="M950.9 143.8L956 138.2H967V143.8Z" fill="#8ccbf6"/><path d="M978 155.3H983.6V165L978 170.5Z" fill="#4a90cc"/>
<!-- split face -->
<path d="M1014.8 131L1023.6 122.6H1063.5V143L1055 150H1014.8Z" fill="#67ade3"/>
<path d="M1055 131L1063.5 122.6V143L1055 150Z" fill="#4a90cc"/><path d="M1014.8 131L1023.6 122.6H1063.5L1055 131Z" fill="#8ccbf6"/>
<path d="M1015 154.1H1059L1064.5 148" fill="none" stroke="#1e88e5" stroke-width="1.2"/>
<path d="M1014.8 157.5H1055L1063.5 149.5V160L1055 168.5H1014.8Z" fill="#dcdcdc" stroke="#555" stroke-width="1"/><path d="M1055 157.5L1063.5 149.5V160L1055 168.5Z" fill="#b9b9b9"/>
<!-- move -->
<path d="M1104 125V167.5M1082.5 146.1H1125.5" stroke="#333" stroke-width="1.6"/>
<path d="M1104 122.5L1098.5 134.5H1109.5ZM1104 170.5L1098.5 158.5H1109.5ZM1080.4 146.1L1092.5 140.5V151.7ZM1127.6 146.1L1115.5 140.5V151.7Z" fill="#333"/>
<!-- new component -->
<path d="M1161.3 152H1179.2V169.3H1161.3ZM1179.2 152H1197.1V169.3H1179.2Z" fill="#dcdcdc" stroke="#555" stroke-width="1.1"/>
<path d="M1197.1 152L1202.9 147.4V163.8L1197.1 169.3Z" fill="#bdbdbd" stroke="#555" stroke-width="1.1"/>
<path d="M1179.2 152L1183.8 147.4H1202.9L1197.1 152Z" fill="#ececec" stroke="#555" stroke-width="1.1"/>
<rect x="1161.3" y="134.6" width="17.9" height="17.4" fill="#67ade3"/><path d="M1161.3 134.6L1165.5 128.6H1184.7L1179.2 134.6Z" fill="#8ccbf6"/><path d="M1179.2 134.6L1184.7 128.6V146.5L1179.2 152Z" fill="#4a90cc"/>
<path d="M1196.5 123.6L1198.7 131L1205.7 127.5L1202.2 134.5L1209.6 136.7L1202.2 138.9L1205.7 145.9L1198.7 142.4L1196.5 149.8L1194.3 142.4L1187.3 145.9L1190.8 138.9L1183.4 136.7L1190.8 134.5L1187.3 127.5L1194.3 131Z" fill="#f5a300" stroke="#e08a00" stroke-width=".5"/>
<!-- joint -->
<path d="M1229.3 164.8V137.6L1238.7 127.5Q1240 125.5 1243 125.5Q1247.6 125.5 1247.6 129V139L1240.3 143.6V157.4Z" fill="#dcdcdc" stroke="#555" stroke-width="1.1"/>
<ellipse cx="1243.1" cy="128.3" rx="3.6" ry="2.2" fill="#eee" stroke="#555" stroke-width="1"/>
<path d="M1259.5 129.2L1270.3 138.3V165.8L1259.5 157.2Z" fill="#dcdcdc" stroke="#555" stroke-width="1.1"/>
<path d="M1251.6 143V155Q1251.6 158 1255.6 158Q1259.5 158 1259.5 155V143Z" fill="#cfcfcf" stroke="#555" stroke-width="1.1"/>
<ellipse cx="1255.6" cy="142.8" rx="3.9" ry="2.3" fill="#eee" stroke="#555" stroke-width="1"/>
<path d="M1242.7 144.7V152.9M1255.8 134V141.8" stroke="#1e88e5" stroke-width="1.3"/>
<!-- table -->
<rect x="1289.8" y="122.6" width="10.6" height="10" fill="#67ade3" stroke="#555" stroke-width=".9"/>
<path d="M1289.8 132.6H1300.4V142.6H1289.8ZM1300.4 132.6H1311V142.6H1300.4Z" fill="#fff" stroke="#555" stroke-width=".9"/>
<path d="M1297 142.6V163.5M1297 150.3H1310M1297 156.5H1310M1297 163H1310" fill="none" stroke="#aaa" stroke-width="1"/>
<rect x="1312" y="140.5" width="25.5" height="29.5" fill="#fff" stroke="#555" stroke-width="1.2"/><rect x="1312" y="140.5" width="25.5" height="4.5" fill="#555"/>
<path d="M1312 150.5H1337.5M1312 156H1337.5M1312 161.5H1337.5M1320 145V170" stroke="#555" stroke-width=".9"/>
<!-- configure -->
<path d="M1375.4 133.5L1385.6 122.4H1417.3V155L1407.5 164.7H1375.4Z" fill="#dcdcdc" stroke="#777" stroke-width="1"/>
<path d="M1407.5 133.5L1417.3 122.4V155L1407.5 164.7Z" fill="#bdbdbd"/><path d="M1375.4 133.5L1385.6 122.4H1417.3L1407.5 133.5Z" fill="#eaeaea"/>
<path d="M1375.4 133.5H1407.5V164.7M1407.5 133.5L1417.3 122.4" fill="none" stroke="#777" stroke-width=".8"/>
<rect x="1400" y="153" width="26" height="16" fill="#f2f2f2"/>
<path d="M1402.7 156.5H1423.7M1402.7 165.7H1423.7" stroke="#555" stroke-width="2"/><rect x="1406.8" y="152" width="2.8" height="9" fill="#1e88e5"/><rect x="1416" y="161.8" width="2.8" height="8.2" fill="#555"/>
<rect x="1440.6" y="122.9" width="44" height="42.5" fill="#f2f2f2" stroke="#666" stroke-width="1.3"/><rect x="1440.1" y="122.4" width="45" height="8" fill="#666"/><rect x="1443" y="124.8" width="5.5" height="3" fill="#eee"/>
<path d="M1444.7 136.5H1480.3V159.3H1444.7ZM1444.7 144.7H1480.3M1444.7 152H1480.3M1452.9 136.5V159.3M1460.2 136.5V159.3" fill="none" stroke="#666" stroke-width="1.2"/>
<rect x="1464" y="153" width="26" height="17" fill="#f2f2f2"/>
<path d="M1467.5 156.5H1487.6M1467.5 165.7H1487.6" stroke="#555" stroke-width="2"/><rect x="1471.6" y="152" width="2.8" height="9" fill="#1e88e5"/><rect x="1480.7" y="161.8" width="2.8" height="8.2" fill="#555"/>
<!-- construct -->
<path d="M1566 168.4V135.5L1578.8 122.8H1589.8L1577.9 135.5V168.4Z" fill="#dcdcdc" stroke="#555" stroke-width="1.1"/>
<path d="M1579.7 135.5L1592.5 122.8V155.6L1579.7 168.4Z" fill="#57c17b" stroke="#3d9a5c" stroke-width=".7"/>
<path d="M1597.1 135.5L1610.8 122.8V155.6L1597.1 168.4Z" fill="#e8955a" stroke="#cf7c45" stroke-width=".7"/>
<!-- inspect -->
<path d="M1709 134V147.5M1749.8 134V147.5M1711 141H1748" stroke="#555" stroke-width="1.3"/>
<path d="M1710 141L1716 137.8V144.2ZM1748.8 141L1742.8 137.8V144.2Z" fill="#555"/>
<rect x="1708.6" y="149.3" width="41.8" height="8.3" fill="#f5a300" stroke="#e09a30" stroke-width=".7"/>
<path d="M1712.5 149.3V152.5M1716.8 149.3V151.5M1721 149.3V152.5M1725.3 149.3V151.5M1729.5 149.3V152.5M1733.8 149.3V151.5M1738 149.3V152.5M1742.3 149.3V151.5M1746.5 149.3V152.5" stroke="#8a5a00" stroke-width="1"/>
<!-- insert derive -->
<path d="M1815.5 138L1822 129H1853.8V155L1845 167H1815.5Z" fill="#dcdcdc" stroke="#666" stroke-width="1.1"/>
<path d="M1842 138L1853.8 129V155L1842 164Z" fill="#bdbdbd"/><path d="M1815.5 138L1822 129H1853.8L1842 138Z" fill="#ececec"/>
<path d="M1808.8 127H1821.5V122.7L1835.6 131.5L1821.5 140.2V135.8H1808.8Z" fill="#1e88e5"/>
<path d="M1836.5 166.5L1842.5 160.5M1847 156L1853 150" stroke="#333" stroke-width="6" stroke-linecap="round"/>
<path d="M1836.5 166.5L1842.5 160.5M1847 156L1853 150" stroke="#f2f2f2" stroke-width="2.2" stroke-linecap="round"/>
<path d="M1841 162L1848.5 154.5" stroke="#333" stroke-width="2.4"/>
<!-- insert bolt -->
<path d="M1878 124.3H1911Q1912.8 124.3 1912.8 126V135.5H1876.2V126Q1876.2 124.3 1878 124.3Z" fill="#7fbdef" stroke="#5a9fd6" stroke-width=".8"/>
<rect x="1904" y="124.6" width="8.6" height="10.7" fill="#4a90cc"/><rect x="1876.5" y="124.6" width="7" height="10.7" fill="#a5d3f7"/>
<rect x="1884.2" y="135.5" width="20.7" height="34.2" rx="1.5" fill="#8cc8f5" stroke="#5a9fd6" stroke-width=".8"/>
<path d="M1884.2 139.5L1904.9 138M1884.2 143.5L1904.9 142M1884.2 147.5L1904.9 146M1884.2 151.5L1904.9 150M1884.2 155.5L1904.9 154M1884.2 159.5L1904.9 158M1884.2 163.5L1904.9 162M1884.2 167.5L1904.9 166" stroke="#4a90cc" stroke-width="1"/>
<path d="M1908 149H1913.6V157H1921.6V162.6H1913.6V170.5H1908V162.6H1900V157H1908Z" fill="#22a845" stroke="#f2f2f2" stroke-width=".8"/>
<!-- insert image -->
<rect x="1939" y="124.2" width="43.5" height="43.5" fill="#8cc8f5" stroke="#4a90cc" stroke-width=".8"/>
<path d="M1939 150Q1946 135 1952 140Q1961 151 1967 149Q1973 142 1982.5 152V167.7H1939Z" fill="#3f8fcc"/>
<circle cx="1971.6" cy="135.8" r="4.2" fill="#fff8c0" stroke="#e8e090" stroke-width=".6"/>
<!-- select -->
<rect x="2032" y="117.3" width="57.8" height="57.7" fill="#0a96d7"/>
<rect x="2037" y="122.5" width="41.5" height="32.7" fill="none" stroke="#7ed67e" stroke-width="1.3" stroke-dasharray="4 2.5"/>
<path d="M2070 143.5V170L2075.5 165L2080 174L2083.5 172.5L2079.5 163.5H2087Z" fill="#fff"/>
</svg>

<!-- TIMELINE -->
<svg class="abs" style="left:0;top:2013px" width="3840" height="76" viewBox="0 2013 3840 76">
<defs>
<g id="tcube"><path d="M0 6L6 0H24V18L18 24H0Z" fill="#67ade3"/><path d="M0 6L6 0H24L18 6Z" fill="#8ccbf6"/><path d="M18 6L24 0V18L18 24Z" fill="#4a94d0"/></g>
<g id="text"><path d="M0 7L5 2H17V17L12 22H0Z" fill="#67ade3"/><path d="M0 7L5 2H17L12 7Z" fill="#8ccbf6"/><path d="M12 7L17 2V17L12 22Z" fill="#4a94d0"/><path d="M0 22H12L17 17V19.5L12 24H0Z" fill="#b5b5b5"/><path d="M21 18V2" stroke="#333" stroke-width="1.2"/><path d="M19 4.5L21 0L23 4.5Z" fill="#333"/></g>
<g id="tsk"><path d="M1.5 1.5H21.5V14M1.5 1.5V21.5H13" fill="none" stroke="#999" stroke-width="1.2"/><path d="M7 6.5H15M6 7.5V15.5M15.5 7.5Q14 14 7 16" fill="none" stroke="#888" stroke-width="1"/><g fill="#1e88e5"><rect x="0" y="0" width="3" height="3"/><rect x="20" y="0" width="3" height="3"/><rect x="0" y="20" width="3" height="3"/><rect x="5" y="5" width="2.5" height="2.5"/><rect x="14" y="5" width="2.5" height="2.5"/><rect x="5" y="14.5" width="2.5" height="2.5"/></g><path d="M12 22L14 17L21 10L24 13L17 20Z" fill="#f5b83d"/><path d="M21 10L22.5 8.5Q24 8 25 9.5L25.5 11L24 13Z" fill="#e8322c"/><path d="M12 22L14 17L17 20Z" fill="#555"/></g>
</defs>
<g fill="#666">
<rect x="16.8" y="2041" width="3.2" height="17.8"/><path d="M20.3 2050L33.8 2041.7V2058.3Z"/>
<path d="M52.8 2049.8L67.8 2041V2058.7Z"/><rect x="69.2" y="2047.2" width="2.8" height="7"/>
<path d="M92 2038.2L109.7 2049.2L92 2060.2Z"/>
<rect x="127.2" y="2047.2" width="3" height="7"/><path d="M132 2041L146.7 2049.9L132 2058.8Z"/>
<path d="M167 2041.7L180.3 2050L167 2058.3Z"/><rect x="180.3" y="2041" width="3.2" height="17.8"/>
</g>
<path d="M231.5 2074.5H701M231.5 2065V2074.5M267.5 2065V2074.5M303.5 2065V2074.5M339.5 2065V2074.5M375.5 2065V2074.5M411.5 2065V2074.5M447.5 2065V2074.5M483.5 2065V2074.5M519.5 2065V2074.5M555.5 2065V2074.5M591.5 2065V2074.5M627.5 2065V2074.5M663.5 2065V2074.5M699.5 2065V2074.5" fill="none" stroke="#c8c8c8" stroke-width="2.6"/>
<use href="#tcube" x="219.1" y="2037"/><use href="#tcube" x="255.1" y="2037"/><use href="#tcube" x="291.1" y="2037"/>
<use href="#tsk" x="327" y="2037.5"/><use href="#text" x="363.5" y="2037"/><use href="#tsk" x="399" y="2037.5"/><use href="#tsk" x="435" y="2037.5"/>
<use href="#text" x="471.5" y="2037"/><use href="#tsk" x="507" y="2037.5"/><use href="#text" x="543.5" y="2037"/>
<use href="#tcube" x="579.1" y="2037"/><use href="#tcube" x="615.1" y="2037"/>
<g opacity=".28"><use href="#tsk" x="651" y="2037.5"/><use href="#tsk" x="687" y="2037.5"/></g>
<rect x="643.5" y="2031" width="3.2" height="44.5" fill="#555"/>
<path d="M635.8 2028.5H654L651.5 2034L645 2037L638.5 2034Z" fill="#555"/>
<!-- gear -->
<g fill="#808080" transform="translate(3808.4 2049.4)"><circle r="8.2"/><rect x="-2.2" y="-11.2" width="4.4" height="22.4"/><rect x="-2.2" y="-11.2" width="4.4" height="22.4" transform="rotate(45)"/><rect x="-2.2" y="-11.2" width="4.4" height="22.4" transform="rotate(90)"/><rect x="-2.2" y="-11.2" width="4.4" height="22.4" transform="rotate(135)"/></g>
<circle cx="3808.4" cy="2049.4" r="3.7" fill="#f2f2f2"/>
</svg>

<!-- TASKBAR -->
<svg class="abs" style="left:0;top:2089px" width="3840" height="71" viewBox="0 2089 3840 71">
<defs>
<linearGradient id="win" x1="0" y1="0" x2="1" y2="1"><stop offset="0" stop-color="#4fd1ff"/><stop offset="1" stop-color="#0068d0"/></linearGradient>
<linearGradient id="edge1" x1="0" y1="0" x2="1" y2="1"><stop offset="0" stop-color="#35c1f1"/><stop offset=".6" stop-color="#2fb4a9"/><stop offset="1" stop-color="#66eb6e"/></linearGradient>
<linearGradient id="warn" x1="0" y1="0" x2="0" y2="1"><stop offset="0" stop-color="#fff48a"/><stop offset="1" stop-color="#e9b800"/></linearGradient>
<linearGradient id="folder" x1="0" y1="0" x2="0" y2="1"><stop offset="0" stop-color="#ffe27a"/><stop offset="1" stop-color="#f9c23c"/></linearGradient>
</defs>
<!-- weather umbrella -->
<path d="M44.4 2112.3V2114" stroke="#666" stroke-width="1.4"/>
<path d="M30 2126.2Q32 2114.5 44.4 2113.9Q56.5 2114.5 58.8 2125.8Q55.5 2124.8 52.5 2126.5Q48.5 2124.5 44.5 2126.5Q40.5 2124.5 36.5 2126.5Q33.5 2124.8 30 2126.2Z" fill="#7fc0f6"/>
<path d="M44.4 2113.9Q56.5 2114.5 58.8 2125.8Q55.5 2124.8 52.5 2126.5Q48.5 2124.5 44.5 2126.5Z" fill="#4aa6ee"/>
<path d="M44.4 2113.9Q40 2118 37 2126M44.4 2113.9Q49 2118 52 2126" fill="none" stroke="#a8d6fa" stroke-width=".7"/>
<path d="M44.5 2126.5V2135.6Q44.5 2139.8 41.5 2139.8Q38.8 2139.8 38.8 2135.6V2134.3" fill="none" stroke="#777" stroke-width="2.3" stroke-linecap="round"/>
<path d="M45.6 2110.2L48.6 2107M52.6 2109L55.3 2106.2M54.6 2114.2L57.3 2111.6M60.5 2113.8L63.4 2111.2M60.5 2121.1L63.4 2118.6" stroke="#3a9cf0" stroke-width="2.2" stroke-linecap="round"/>
<!-- windows -->
<g fill="url(#win)"><rect x="1535.7" y="2107.3" width="16.6" height="16.6" rx="1.2"/><rect x="1553.9" y="2107.3" width="16.6" height="16.6" rx="1.2"/><rect x="1535.7" y="2125.2" width="16.6" height="16.6" rx="1.2"/><rect x="1553.9" y="2125.2" width="16.6" height="16.6" rx="1.2"/></g>
<rect x="1592.5" y="2101.4" width="327.1" height="45.2" rx="22.6" fill="#fbefef" stroke="#d9c3c4" stroke-width="1.2"/>
<circle cx="1618.5" cy="2122.2" r="8" fill="none" stroke="#222" stroke-width="2.2"/><path d="M1624 2127.8L1630 2134" stroke="#222" stroke-width="2.4" stroke-linecap="round"/>
<!-- task view -->
<rect x="1947.9" y="2107.4" width="26.8" height="23.7" rx="2" fill="#f4f4f4"/>
<rect x="1939" y="2116.4" width="27" height="24.6" rx="2" fill="#222"/>
<rect x="1947.9" y="2116.4" width="18.1" height="14.7" fill="#bdbdbd"/>
<!-- store -->
<path d="M2007.5 2110.5H2037.5Q2040 2110.5 2040 2113V2137Q2040 2142 2035 2142H2010Q2005 2142 2005 2137V2113Q2005 2110.5 2007.5 2110.5Z" fill="#1d4e92"/>
<path d="M2013.5 2112V2107.6H2031.5V2112" fill="none" stroke="#2cb3f2" stroke-width="1.8"/>
<rect x="2015" y="2118.7" width="7" height="7" fill="#f25022"/><rect x="2023" y="2118.7" width="7" height="7" fill="#7fba00"/><rect x="2015" y="2126.7" width="7" height="7" fill="#00a4ef"/><rect x="2023" y="2126.7" width="7" height="7" fill="#ffb900"/>
<!-- explorer -->
<path d="M2071 2110Q2071 2107.9 2073 2107.9H2083L2086 2110.5H2104.7Q2106.7 2110.5 2106.7 2112.5V2140.5H2071Z" fill="#e8a917"/>
<rect x="2071" y="2112.5" width="35.7" height="28" rx="1" fill="url(#folder)"/>
<path d="M2077 2140.5V2133Q2077 2130 2080 2130H2097Q2100 2130 2100 2133V2140.5Z" fill="#1e7fd8"/>
<rect x="2082" y="2134.2" width="13" height="1.6" fill="#0c4a9a"/>
<!-- edge -->
<path d="M2137.5 2128Q2138 2106 2158 2105.5Q2172.5 2106.5 2173 2121Q2172.5 2128.5 2164 2129Q2155.5 2129 2155 2124Q2155 2120 2158 2118Q2151 2115 2145 2121Q2140.5 2126 2141 2134Q2138 2131 2137.5 2128Z" fill="url(#edge1)"/>
<path d="M2141 2134Q2142 2142.5 2155 2142Q2165 2141 2170 2134Q2162 2137 2156 2133Q2151 2128.5 2153 2123Q2147 2127 2147 2134Z" fill="#1a6fd1"/>
<rect x="2137.2" y="2128.8" width="18" height="13.2" rx="1.5" fill="#c17a1b"/><rect x="2137.2" y="2128.8" width="18" height="5.5" fill="#e39a2e"/><rect x="2142.5" y="2126.3" width="7.4" height="3" fill="none" stroke="#6b4510" stroke-width="1.2"/><circle cx="2146" cy="2135" r="1" fill="#ffd86b"/>
<!-- warning -->
<path d="M2221 2109L2238.7 2140H2203.3Z" fill="#b5b5b5"/><path d="M2221 2112.5L2235.5 2138H2206.5Z" fill="url(#warn)"/>
<rect x="2219.7" y="2118.5" width="2.8" height="11" rx="1" fill="#222"/><circle cx="2221.1" cy="2133.5" r="1.7" fill="#222"/>
<!-- fusion -->
<rect x="2258.9" y="2096.2" width="56.2" height="55.9" rx="6" fill="#f9eded" stroke="#e8d6d7" stroke-width="1"/>
<path d="M2276 2105.5H2300Q2302.5 2105.5 2302.5 2108V2131H2270V2111.5Q2270 2105.5 2276 2105.5Z" fill="#ff6d00"/>
<path d="M2270 2131V2111.5Q2270 2105.5 2276 2105.5H2279L2277 2108V2131Z" fill="#ff9a45"/>
<path d="M2277 2130H2303.4V2142H2279Q2277 2142 2277 2140Z" fill="#8f3306"/>
<text x="2290.5" y="2140" font-family="Liberation Sans" font-weight="bold" font-size="9" fill="#f6d0b8" text-anchor="middle">FUS</text>
<path d="M2284.5 2110.5H2295V2114H2289V2117.5H2294V2121H2289V2126H2284.5Z" fill="#fff"/>
<rect x="2275" y="2148.2" width="23.8" height="4.6" rx="2.3" fill="#1470d0"/>
<g fill="#8a7e7f"><rect x="2085" y="2148.2" width="8.8" height="4.6" rx="2.3"/><rect x="2151.2" y="2148.2" width="8.8" height="4.6" rx="2.3"/><rect x="2217" y="2148.2" width="8.8" height="4.6" rx="2.3"/></g>
<!-- tray -->
<path d="M3541.2 2127.5L3548.9 2119.8L3556.6 2127.5" fill="none" stroke="#111" stroke-width="1.5"/>
<path d="M3586 2129.5Q3585 2121 3592 2120Q3595 2115.5 3600.5 2117Q3606 2118.5 3605.5 2123Q3608.5 2124.5 3608 2127.5Q3607 2130.5 3603.5 2131H3590Q3586.5 2131 3586 2129.5Z" fill="#b8b8b8" stroke="#222" stroke-width="1"/>
<path d="M3587 2114L3606.5 2133.8" stroke="#111" stroke-width="1.3"/>
<path d="M3640.5 2134H3632.7Q3633.2 2115.5 3633.2 2115.5H3650M3637 2134V2136.8M3632 2136.8H3648M3653.5 2123.5V2136.5" fill="none" stroke="#111" stroke-width="1.3"/>
<rect x="3650" y="2114.5" width="6.5" height="9" rx="2" fill="none" stroke="#111" stroke-width="1.3"/>
<path d="M3669.5 2119.5H3673.5L3679 2114.5V2133.5L3673.5 2128.5H3669.5Z" fill="none" stroke="#111" stroke-width="1.3"/>
<path d="M3682.5 2120.5Q3684.5 2124 3682.5 2127.5M3685.5 2118Q3689 2124 3685.5 2130" fill="none" stroke="#111" stroke-width="1.3"/>
<path d="M3688.5 2115.5Q3693.5 2124 3688.5 2132.5" fill="none" stroke="#aaa" stroke-width="1"/>
</svg>
<div class="t" style="left:76px;top:2104px;font-size:17.8px;color:#1a1a1a">Rain/snow ahead</div>
<div class="t" style="left:76px;top:2128px;font-size:17px;color:#555">-2°C</div>
<div class="t" style="left:1647.5px;top:2113.5px;font-size:19.2px;color:#555;transform:scaleY(1.25);transform-origin:0 0">Search</div>
<div class="t" style="left:3713px;top:2104px;font-size:18.3px;color:#111;width:98px;text-align:right">8:34 AM</div>
<div class="t" style="left:3713px;top:2127.5px;font-size:18.8px;color:#111;width:98px;text-align:right">11/11/2025</div>

</body></html>
